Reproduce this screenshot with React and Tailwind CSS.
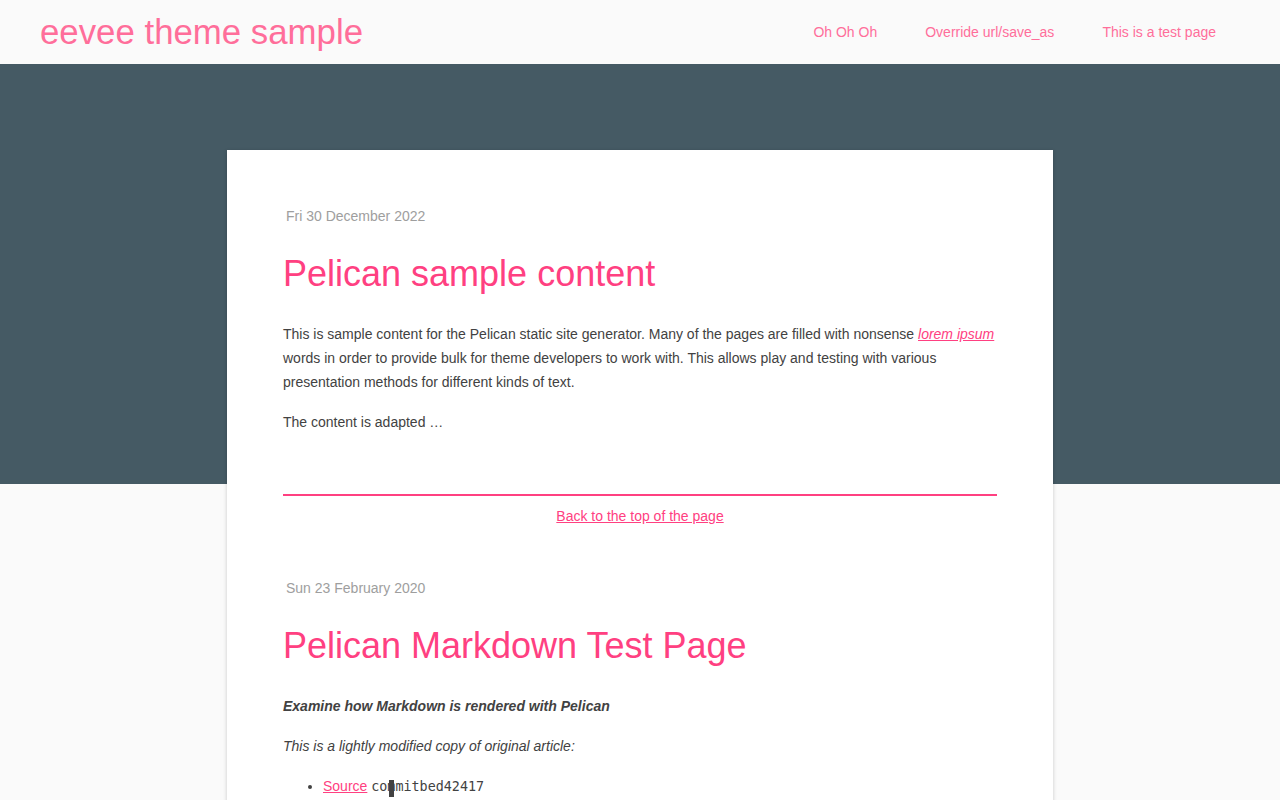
export default function App() {
  const nav = ['Oh Oh Oh', 'Override url/save_as', 'This is a test page'];

  return (
    <div className="min-h-[800px] bg-[#fafafa] font-['Liberation_Sans',Arial,sans-serif] text-[#424242]">
      {/* top bar */}
      <header className="h-16 bg-[#fafafa] flex items-center justify-between pl-10 pr-10">
        <a href="#" className="text-[34.8px] leading-none text-[#ff6e9a]">eevee theme sample</a>
        <nav className="flex">
          {nav.map((n) => (
            <a key={n} href="#" className="px-6 text-sm text-[#ff6e9a]">{n}</a>
          ))}
        </nav>
      </header>

      <div className="relative">
        <div className="absolute inset-x-0 top-0 h-[420px] bg-[#455a64]" />
        <main className="relative pt-[86px] flex justify-center">
          <div className="w-[826px] bg-white shadow-[0_1px_4px_rgba(0,0,0,0.2)] px-14 pt-[54px] pb-10">
            <article>
              <div className="text-sm leading-6 text-[#9e9e9e] pl-[3px]">Fri 30 December 2022</div>
              <h1 className="mt-[22px] text-[36px] leading-[48px] text-[#ff4081]">Pelican sample content</h1>
              <p className="mt-6 text-sm leading-6">
                This is sample content for the Pelican static site generator. Many of the pages are filled with nonsense{' '}
                <a href="#" className="italic underline text-[#ff4081]">lorem ipsum</a> words in order to provide bulk for theme developers to work with. This allows play and testing with various presentation methods for different kinds of text.
              </p>
              <p className="mt-4 text-sm leading-6">The content is adapted …</p>
            </article>

            <hr className="mt-[60px] border-0 h-[2px] bg-[#ff4081]" />
            <div className="mt-2 text-center text-sm leading-6">
              <a href="#" className="underline text-[#ff4081]">Back to the top of the page</a>
            </div>

            <article className="mt-12">
              <div className="text-sm leading-6 text-[#9e9e9e] pl-[3px]">Sun 23 February 2020</div>
              <h1 className="mt-[22px] text-[36px] leading-[48px] text-[#ff4081]">Pelican Markdown Test Page</h1>
              <p className="mt-6 text-sm leading-6 italic font-bold">Examine how Markdown is rendered with Pelican</p>
              <p className="mt-4 text-sm leading-6 italic">This is a lightly modified copy of original article:</p>
              <ul className="mt-4 list-disc pl-10 text-sm leading-6">
                <li>
                  <a href="#" className="underline text-[#ff4081]">Source</a>{' '}
                  <span className="relative font-['DejaVu_Sans_Mono',monospace] text-[13.4px]">
                    commitbed42417
                    <span className="absolute left-[18px] top-[1px] w-[5px] h-[17px] bg-[#424242]" />
                  </span>
                </li>
              </ul>
            </article>
          </div>
        </main>
      </div>
    </div>
  );
}
